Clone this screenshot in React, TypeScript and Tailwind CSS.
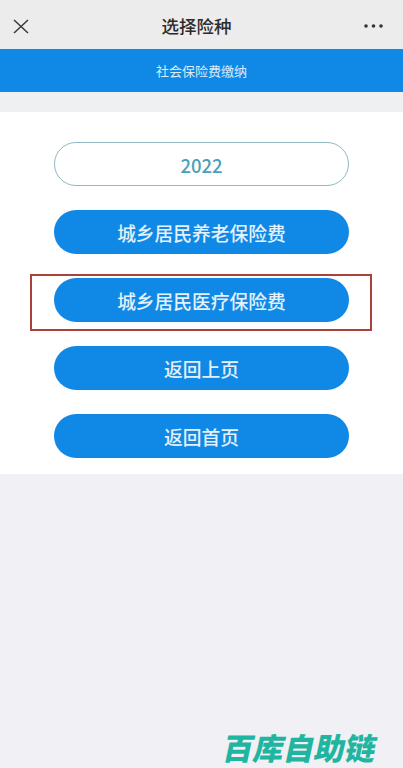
import React from "react";

const cjk = "font-['Noto_Sans_CJK_SC','Noto_Sans',sans-serif]";

function Pill({ label }: { label: string }) {
  return (
    <div className="flex h-11 w-[295px] items-center justify-center rounded-full bg-[#1089e6] pt-[3px] text-[18.75px] font-medium leading-none text-[#e4f1fb]">
      {label}
    </div>
  );
}

export default function App() {
  return (
    <div className={`relative flex h-[768px] w-[403px] flex-col overflow-hidden bg-[#f0f0f5] ${cjk}`}>
      <header className="flex h-[49px] shrink-0 items-center justify-between bg-[#ececec] pl-[13px] pr-[20px] pt-[3px]">
        <svg width="16" height="15" viewBox="0 0 16 15" fill="none" stroke="#3a3a3a" strokeWidth="1.5">
          <path d="M1 1 L15 14 M15 1 L1 14" />
        </svg>
        <h1 className="text-[17.5px] font-medium leading-none text-[#2b2b2b]">选择险种</h1>
        <svg width="19" height="4" viewBox="0 0 19 4" fill="#333333">
          <circle cx="2" cy="2" r="1.8" />
          <circle cx="9.5" cy="2" r="1.8" />
          <circle cx="17" cy="2" r="1.8" />
        </svg>
      </header>
      <div className="flex h-[43px] shrink-0 items-center justify-center bg-[#1089e6] text-[13px] leading-none text-[#d8ecfb]">
        社会保险费缴纳
      </div>
      <div className="h-5 shrink-0 bg-[#eff0f2]" />
      <main className="relative flex h-[362px] shrink-0 flex-col items-center gap-6 bg-white pt-[30px]">
        <div className="flex h-11 w-[295px] items-center justify-center rounded-full border-[1.5px] border-[#8fb8c0] bg-white pt-[2px] text-[18.5px] font-medium leading-none text-[#4a9fb8]">
          2022
        </div>
        <Pill label="城乡居民养老保险费" />
        <Pill label="城乡居民医疗保险费" />
        <Pill label="返回上页" />
        <Pill label="返回首页" />
        <div className="absolute left-[30px] top-[162px] h-[57px] w-[342px] border-2 border-[#a8423a]" />
      </main>
      <div className="absolute bottom-[6px] left-[224px] -skew-x-12 text-[30.5px] font-black leading-none text-[#1fb5a0]">
        百库自助链
      </div>
    </div>
  );
}
